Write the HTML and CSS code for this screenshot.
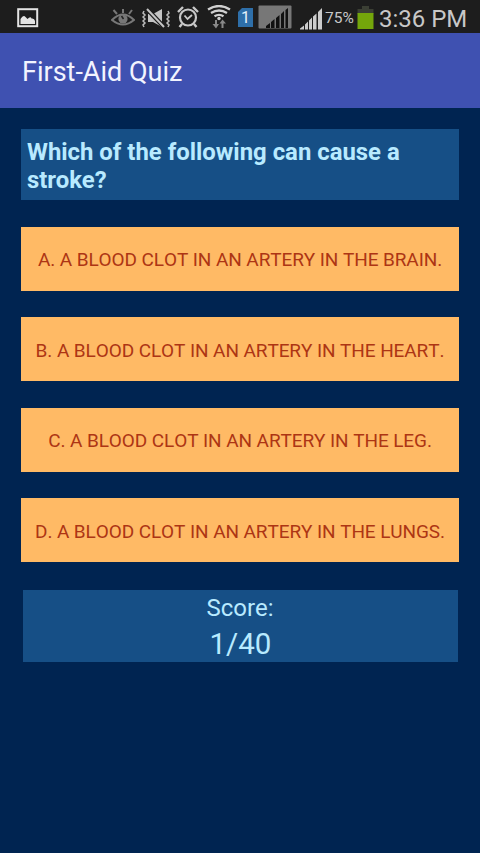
FILE: index.html
```html
<!DOCTYPE html>
<html lang="en">
<head>
  <meta charset="UTF-8" />
  <meta name="viewport" content="width=device-width, initial-scale=1.0"/>
  <title>First-Aid Quiz</title>
  <link rel="stylesheet" href="styles.css">
</head>
<body>

  <div class="status-bar">
    <svg class="icon-picture" width="22" height="20" viewBox="0 0 22 20">
      <rect x="1.2" y="1.2" width="19" height="17" fill="none" stroke="#e4e4e4" stroke-width="2"/>
      <path d="M3.5 16v-5q3-5 5-2l2 2q3-3 4-.5 3-.5 3.500 2.500v3z" fill="#e4e4e4"/>
    </svg>

    <div class="status-icons">
      <svg class="icon-eye" width="24" height="22" viewBox="0 0 24 22">
        <path d="M1 14q11-11 22 0q-11 9-22 0z" fill="none" stroke="#777" stroke-width="2"/>
        <circle cx="12" cy="13" r="4.600" fill="#777"/>
        <path d="M12.500 13l-2-3" stroke="#222" stroke-width="1.500"/>
        <path d="M12 7V3M6 8L2.500 4M18 8l3-4" stroke="#777" stroke-width="2"/>
      </svg>
      <svg class="icon-vibrate" width="28" height="22" viewBox="0 0 28 22">
        <path d="M2 3l-1 2 2 2-2 2 2 2-2 2 2 2-2 2 1 2M26 3l1 2-2 2 2 2-2 2 2 2-2 2 2 2-1 2" fill="none" stroke="#bbb" stroke-width="1.500"/>
        <path d="M6 6h5l9-5v18l-9-5H6z" fill="#c4c4c4"/>
        <path d="M5 1l17 18" stroke="#1d1d1d" stroke-width="4.500"/>
        <path d="M5 1l17 18" stroke="#c4c4c4" stroke-width="2"/>
      </svg>
      <svg class="icon-alarm" width="22" height="22" viewBox="0 0 22 22">
        <circle cx="11" cy="11.500" r="8" fill="none" stroke="#c8c8c8" stroke-width="2.200"/>
        <path d="M1 6l5-5M21 6l-5-5M5 18l-2.500 3M17 18l2.500 3" stroke="#c8c8c8" stroke-width="2.400"/>
        <path d="M7.500 9.500l3 3.500 4.500-4" fill="none" stroke="#c8c8c8" stroke-width="1.800"/>
      </svg>
      <svg class="icon-wifi" width="24" height="24" viewBox="0 0 24 24">
        <path d="M1 4.500q11-7 22 0M4 8q8-5 16 0M7.500 11.300q4.500-3 9 0" fill="none" stroke="#d0d0d0" stroke-width="2.300"/>
        <circle cx="12" cy="13.500" r="1.700" fill="#d0d0d0"/>
        <path d="M9 15v6M15.500 23v-6" stroke="#898989" stroke-width="2"/>
        <path d="M5.500 19H12l-3 4.500zM12.500 18.500h6.500l-3.500-4z" fill="#898989"/>
      </svg>
      <div class="sim">1</div>
      <svg class="icon-roaming" width="34" height="24" viewBox="0 0 34 24">
        <rect x=".5" y=".5" width="33" height="23" rx="1" fill="#777"/>
        <path d="M8 23v-2l4-3v5zM13 23v-6l3.500-3v9zM18 23V13l3.500-3v13zM23 23V9l3-3v17zM27.500 23V5l2.500-2v20z" fill="#111"/>
      </svg>
      <svg class="icon-signal" width="22" height="22" viewBox="0 0 22 22">
        <path d="M0 21.500v-1l4-3v4zM5 21.500v-5l3-3v8zM9 21.500v-9l3-3v12zM13 21.500v-13l3.500-3v16zM18 21.500V4l4-4v21.500z" fill="#ccc"/>
      </svg>
      <span class="percent">75%</span>
      <svg class="icon-battery" width="17" height="23" viewBox="0 0 17 23">
        <path d="M5 0h7v3h4.500v5H.5V3H5z" fill="#3b3f34"/>
        <rect x=".5" y="7" width="16" height="16" fill="#74a60b"/>
      </svg>
      <span class="clock">3:36 PM</span>
    </div>
  </div>

  <header class="main-header">
    <h1 class="title">First-Aid Quiz</h1>
  </header>

  <main class="quiz">
    <p class="question">Which of the following can cause a stroke?</p>

    <div class="answers">
      <button class="answer">A. A blood clot in an artery in the brain.</button>
      <button class="answer">B. A blood clot in an artery in the heart.</button>
      <button class="answer">C. A blood clot in an artery in the leg.</button>
      <button class="answer">D. A blood clot in an artery in the lungs.</button>
    </div>

    <div class="score">
      <span class="score-label">Score:</span>
      <span class="score-value">1/40</span>
    </div>
  </main>

</body>
</html>
```
FILE: styles.css
```css
body, html {
  margin: 0;
  padding: 0;
  background: #002451;
  color: white;
  font-family: Roboto, sans-serif;
}

.status-bar {
  display: flex;
  align-items: flex-start;
  height: 33px;
  box-sizing: border-box;
  padding-left: 17px;
  background: #1d1d1d;
  color: #c8c8c8;
  white-space: nowrap;
}

.status-bar svg {
  flex: none;
}

.icon-picture {
  margin-top: 8px;
}

.status-icons {
  display: flex;
  align-items: flex-start;
  margin-left: 72px;
}

.icon-eye { margin-top: 6px; }
.icon-vibrate { margin: 8px 0 0 7px; }
.icon-alarm { margin: 6px 0 0 7px; }
.icon-wifi { margin: 5px 0 0 8px; }

.sim {
  width: 15px;
  height: 19px;
  margin: 8px 0 0 7px;
  background: #2e6fa9;
  color: #e4f1fa;
  font-size: 16px;
  line-height: 19px;
  text-align: center;
  clip-path: polygon(4px 0, 100% 0, 100% 100%, 0 100%, 0 4px);
}

.icon-roaming { margin: 5px 0 0 5px; }
.icon-signal { margin: 8px 0 0 8px; }

.percent {
  width: 32px;
  margin-left: 3px;
  font-size: 15.5px;
  line-height: 36px;
}

.icon-battery { margin-top: 6px; }

.clock {
  margin-left: 5px;
  font-size: 24px;
  line-height: 39px;
}

.main-header {
  display: flex;
  align-items: center;
  height: 75px;
  padding-left: 22px;
  background: #3f51b1;
}

.title {
  margin: 2px 0 0;
  font-size: 27px;
  font-weight: 400;
  color: #f2f4ff;
}

.quiz {
  padding: 21px 21px 0;
}

.question {
  height: 71px;
  box-sizing: border-box;
  margin: 0 0 26.5px;
  padding: 9px 6px 0;
  background: #164f86;
  color: #b8eaff;
  font-size: 23.9px;
  font-weight: 700;
  line-height: 28px;
}

.answers {
  display: grid;
  gap: 26.67px;
}

.answer {
  height: 64px;
  padding: 2px 0 0;
  border: none;
  background: #ffba65;
  color: #ad3514;
  font-family: inherit;
  font-size: 19px;
  font-kerning: none;
  letter-spacing: -0.09px;
  text-transform: uppercase;
  white-space: nowrap;
  cursor: pointer;
}

.score {
  display: flex;
  flex-direction: column;
  align-items: center;
  height: 72px;
  margin: 27.5px 1.5px 0;
  background: #164f86;
  color: #b8eaff;
}

.score-label {
  font-size: 24px;
  line-height: 36px;
}

.score-value {
  padding-left: 1px;
  font-size: 29.5px;
  line-height: 36px;
}
```
